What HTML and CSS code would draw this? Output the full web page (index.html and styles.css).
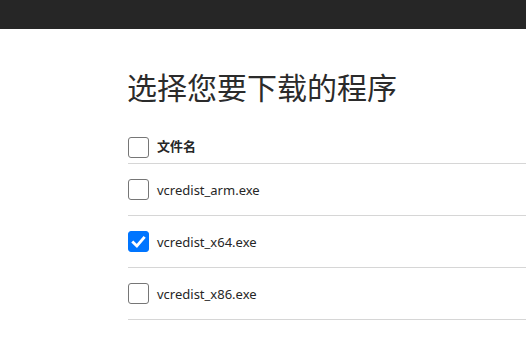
FILE: index.html
```html
<!DOCTYPE html>
<html lang="zh-CN">
<head>
<meta charset="utf-8">
<link rel="stylesheet" href="styles.css">
</head>
<body>
<header class="topbar"></header>
<main class="content">
  <h1 class="title">选择您要下载的程序</h1>
  <div class="list">
    <label class="row head">
      <span class="box"></span>
      <span class="name">文件名</span>
    </label>
    <label class="row">
      <span class="box"></span>
      <span class="name">vcredist_arm.exe</span>
    </label>
    <label class="row">
      <span class="box checked">
        <svg viewBox="0 0 20 20" width="20" height="20"><path d="M4.5 10.5 L8.3 14.2 L15.5 5.8" fill="none" stroke="#fff" stroke-width="3" stroke-linecap="square" stroke-linejoin="miter"/></svg>
      </span>
      <span class="name">vcredist_x64.exe</span>
    </label>
    <label class="row">
      <span class="box"></span>
      <span class="name">vcredist_x86.exe</span>
    </label>
  </div>
</main>
</body>
</html>
```
FILE: styles.css
```css
html, body {
  margin: 0;
  padding: 0;
  background: #fff;
}
body {
  font-family: "Noto Sans", "Noto Sans CJK SC", sans-serif;
  color: #262626;
  overflow: hidden;
}
.topbar {
  height: 29px;
  background: #262626;
}
.content {
  padding-left: 128px;
  padding-top: 35px;
}
.title {
  margin: 0 0 0 -1px;
  font-family: "Noto Sans CJK SC", sans-serif;
  font-weight: 400;
  font-size: 30px;
  line-height: 44px;
  color: #2b2b2b;
}
.list {
  margin-top: 29px;
}
.row {
  display: flex;
  align-items: center;
  gap: 8px;
  height: 51px;
  border-bottom: 1px solid #d6d6d6;
}
.row.head {
  box-sizing: border-box;
  height: 27px;
  padding-bottom: 6px;
}
.box {
  box-sizing: border-box;
  width: 21px;
  height: 21px;
  border: 1px solid #767676;
  border-radius: 3px;
  background: #fff;
  flex: none;
  display: flex;
}
.box.checked {
  background: #0075ff;
  border-color: #0075ff;
}
.name {
  font-size: 13px;
  color: #262626;
}
.head .name {
  font-family: "Noto Sans CJK SC", sans-serif;
  font-weight: 700;
  font-size: 13px;
  line-height: 21px;
  margin-bottom: 4px;
}
```
